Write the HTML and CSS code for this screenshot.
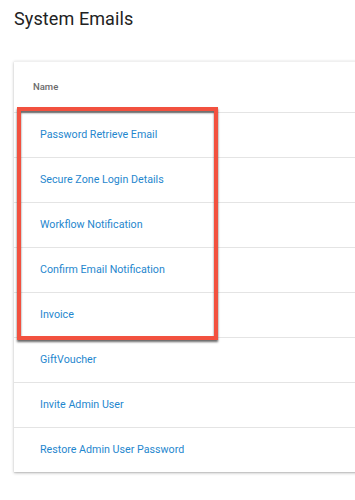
FILE: index.html
```html
<!DOCTYPE html>
<html lang="en">
<head>
    <meta charset="UTF-8">
    <meta name="viewport" content="width=device-width, initial-scale=1.0">
    <title>System Emails</title>
    <link rel="stylesheet" href="styles.css">
</head>
<body>

    <div class="page">
        <h1 class="page-title">System Emails</h1>

        <div class="card">
            <div class="table-head">Name</div>

            <div class="row-group">
                <div class="highlight"></div>
                <a class="row" href="#">Password Retrieve Email</a>
                <a class="row" href="#">Secure Zone Login Details</a>
                <a class="row" href="#">Workflow Notification</a>
                <a class="row" href="#">Confirm Email Notification</a>
                <a class="row" href="#">Invoice</a>
            </div>
            <a class="row" href="#">GiftVoucher</a>
            <a class="row" href="#">Invite Admin User</a>
            <a class="row last" href="#">Restore Admin User Password</a>
        </div>
    </div>

</body>
</html>
```

FILE: styles.css
```css
html, body { margin: 0; padding: 0; background: #ffffff; }
body { font-family: Roboto, "Noto Sans", sans-serif; color: #212121; }

.page { padding: 0 0 6px 14px; overflow: hidden; }
.page-title { font-size: 18px; font-weight: 400; color: #222; margin: 0; height: 61px; line-height: 38px; letter-spacing: 0.1px; }

/* Tabla */
.card { margin-right: -12px; background: #fff; box-shadow: 0 1px 3px rgba(0, 0, 0, 0.25), 0 1px 1px rgba(0, 0, 0, 0.08); border-top: 1px solid #f0f0f0; box-sizing: border-box; }
.table-head { height: 50px; line-height: 50px; padding-left: 19px; font-size: 9.5px; font-weight: 500; color: #6b6b6b; border-bottom: 1px solid #e4e4e4; }
.row { display: block; height: 44px; line-height: 44px; padding-left: 26px; font-size: 10.7px; color: #1f87ce; text-decoration: none; border-bottom: 1px solid #e4e4e4; }
.row.last { border-bottom: none; height: 44px; }

/* Recuadro rojo */
.row-group { position: relative; }
.highlight { position: absolute; top: -6px; left: 3px; width: 201px; bottom: -2px; border: 4px solid #f2513f; box-sizing: border-box; box-shadow: 0 2px 2px rgba(40, 40, 40, 0.7), inset 0 2px 2px rgba(40, 40, 40, 0.7); pointer-events: none; z-index: 2; }
```
